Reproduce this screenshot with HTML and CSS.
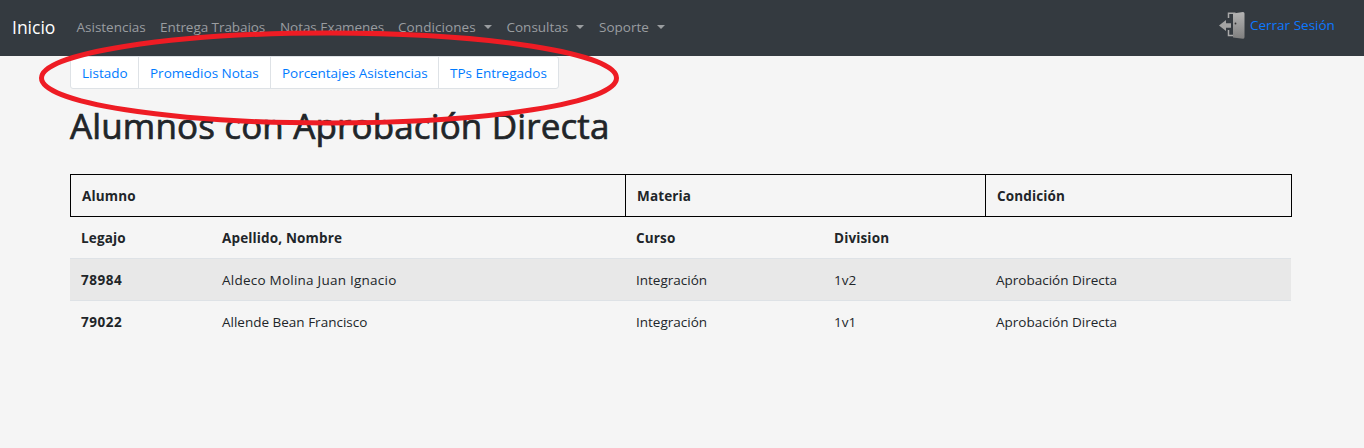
FILE: index.html
```html
<!DOCTYPE html>
<html lang="es">
<head>
<meta charset="utf-8">
<title>Alumnos con Aprobación Directa</title>
<link rel="stylesheet" href="styles.css">
</head>
<body>
<nav class="navbar">
  <a class="brand">Inicio</a>
  <a class="nav-link link-asistencias">Asistencias</a>
  <a class="nav-link link-trabajos">Entrega Trabajos</a>
  <a class="nav-link link-examenes">Notas Examenes</a>
  <a class="nav-link link-condiciones">Condiciones<i class="caret"></i></a>
  <a class="nav-link link-consultas">Consultas<i class="caret"></i></a>
  <a class="nav-link link-soporte">Soporte<i class="caret"></i></a>
  <a class="logout">
    <svg class="door" width="28" height="30" viewBox="0 0 28 30">
      <defs>
        <linearGradient id="metal" x1="0" y1="0" x2="0" y2="1"><stop offset="0" stop-color="#b4b4b4"/><stop offset="1" stop-color="#7f7f7f"/></linearGradient>
      </defs>
      <path d="M10.500 8V3.200h7M10.500 20v5.500h6" fill="none" stroke="#aaa" stroke-width="1.500"/>
      <path d="M15 3.500L25 2q1.500 0 1.500 1.500V27q0 2-1.500 1.800L15 27.500z" fill="url(#metal)"/>
      <path d="M1 15.500l7-5.500v3.200h5v4.600H8V21z" fill="#a3a3a3"/>
      <circle cx="17.500" cy="13.500" r=".9" fill="#333"/>
    </svg>
    <span class="logout-text">Cerrar Sesión</span>
  </a>
</nav>
<main class="content">
  <div class="tabs">
    <a class="tab tab-listado">Listado</a>
    <a class="tab tab-promedios">Promedios Notas</a>
    <a class="tab tab-porcentajes">Porcentajes Asistencias</a>
    <a class="tab tab-tps">TPs Entregados</a>
  </div>
  <h1 class="title">Alumnos con Aprobación Directa</h1>
  <div class="table">
    <div class="row groups"><b class="alumno">Alumno</b><b class="materia">Materia</b><b>Condición</b></div>
    <div class="row heads"><b>Legajo</b><b>Apellido, Nombre</b><b>Curso</b><b>Division</b><b></b></div>
    <div class="row shaded"><b class="legajo">78984</b><span class="long-name">Aldeco Molina Juan Ignacio</span><span>Integración</span><span>1v2</span><span>Aprobación Directa</span></div>
    <div class="row"><b class="legajo">79022</b><span>Allende Bean Francisco</span><span>Integración</span><span>1v1</span><span>Aprobación Directa</span></div>
  </div>
</main>
<svg class="highlight" width="584" height="100" viewBox="0 0 584 100"><ellipse cx="292" cy="50" rx="287.500" ry="45" fill="none" stroke="#ee1c24" stroke-width="5"/></svg>
</body>
</html>
```
FILE: styles.css
```css
* { box-sizing: border-box; }
body {
  margin: 0;
  height: 448px;
  background: #f5f5f5;
  color: #212529;
  font: 13.5px/21px "Open Sans", "Noto Sans", sans-serif;
  overflow: hidden;
}
.navbar {
  height: 56px;
  padding: 0 29px 2px 12px;
  display: flex;
  align-items: center;
  background: #343a40;
  white-space: nowrap;
}
.brand { width: 64.5px; color: #fff; font-size: 17.5px; }
.nav-link { color: #9a9da0; }
.link-asistencias { width: 83.5px; }
.link-trabajos { width: 120px; letter-spacing: -0.06px; }
.link-examenes { width: 118px; letter-spacing: -0.06px; }
.link-condiciones { width: 108.5px; letter-spacing: 0.08px; }
.link-consultas { width: 92.5px; }
.link-soporte { width: 70px; }
.caret {
  display: inline-block;
  margin-left: 8px;
  vertical-align: 3px;
  border: 4px solid transparent;
  border-top-color: currentColor;
  border-bottom: 0;
}
.logout { margin-left: auto; display: flex; align-items: center; color: #0d78ff; }
.door { margin: -4px 4px 0 0; }
.logout-text { width: 85px; margin-top: -4px; }
.content { width: 1222px; margin-left: 70px; }
.tabs {
  display: flex;
  width: 489px;
  height: 33px;
  background: #fff;
  border: 1px solid #dee2e6;
  border-radius: 3px;
  color: #007bff;
  white-space: nowrap;
}
.tab { padding: 6px 0 0 11px; border-right: 1px solid #dee2e6; }
.tab-listado { width: 68px; }
.tab-promedios { width: 132px; }
.tab-porcentajes { width: 168px; letter-spacing: -0.04px; }
.tab-tps { border-right: 0; }
.title {
  margin: 15px 0 27px;
  height: 43px;
  font-size: 35px;
  line-height: 43px;
  font-weight: 500;
  letter-spacing: 0.14px;
  -webkit-text-stroke: 0.7px #212529;
  white-space: nowrap;
}
.row {
  display: grid;
  grid-template-columns: 141px 414px 198px 162px 306px;
  width: 1221px;
  height: 42px;
  line-height: 41px;
  border-top: 1px solid #dee2e6;
}
.row > * { padding: 1px 0 0 11px; white-space: nowrap; }
.row > b { letter-spacing: 0.15px; }
.row > .legajo { letter-spacing: 0.5px; }
.long-name { letter-spacing: 0.24px; }
.groups { grid-template-columns: 555px 360px 305px; width: 1222px; height: 43px; border: 1px solid #000; }
.alumno, .materia { border-right: 1px solid #000; }
.heads { height: 41px; border-top: 0; }
.shaded { background: #e8e8e8; }
.highlight { position: absolute; left: 37px; top: 27.5px; }
```
